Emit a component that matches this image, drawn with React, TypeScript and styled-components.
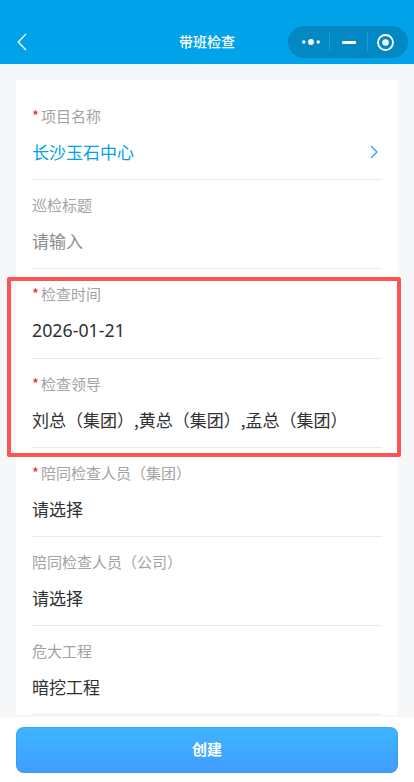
import React from "react";
import styled, { createGlobalStyle } from "styled-components";

const Global = createGlobalStyle`
  html, body { margin: 0; padding: 0; background: #f6f7f9; }
  body { font-family: "Noto Sans CJK SC", "Noto Sans", sans-serif; }
  * { box-sizing: border-box; }
`;

const Page = styled.div`
  width: 414px;
  height: 782px;
  display: flex;
  flex-direction: column;
  overflow: hidden;
`;

const NavBar = styled.header`
  flex: none;
  height: 64px;
  background: #00a2ea;
  padding: 26px 6px 6px 17px;
  display: flex;
  align-items: center;
`;

const BackButton = styled.div`
  width: 10px;
  height: 18px;
  display: flex;
`;

const NavTitle = styled.div`
  flex: 1;
  text-align: center;
  color: #fff;
  font-size: 14px;
  font-weight: 500;
  line-height: 20px;
  padding-left: 99px;
  margin-top: -2px;
`;

const Capsule = styled.div`
  width: 120px;
  height: 32px;
  border-radius: 16px;
  background: #0388c6;
  border: 1px solid #0a82b8;
  display: flex;
  align-items: center;
`;

const CapsuleCell = styled.div<{ $w: number; $inset?: number }>`
  width: ${(p) => p.$w}px;
  padding-left: ${(p) => p.$inset ?? 0}px;
  display: flex;
  justify-content: center;
  align-items: center;
`;

const CapsuleDivider = styled.div`
  width: 1px;
  height: 18px;
  background: #2a9bd0;
`;

const Content = styled.main`
  flex: 1;
  min-height: 0;
  padding: 16px 16px 0;
  position: relative;
  overflow: hidden;
`;

const Card = styled.section`
  background: #fff;
  padding: 11px 16px 0;
`;

const Field = styled.div`
  height: 89.2px;
  padding-top: 15px;
  border-bottom: 1px solid #e9eaec;
`;

const Label = styled.div`
  font-size: 15px;
  line-height: 20px;
  color: #a3a3a3;
  display: flex;
`;

const Star = styled.span`
  color: #f5222d;
  width: 9px;
`;

const ValueRow = styled.div`
  margin-top: 14px;
  height: 24px;
  display: flex;
  justify-content: space-between;
  align-items: center;
  padding-right: 4px;
`;

const Value = styled.div<{ $tone?: "link" | "muted"; $numeric?: boolean }>`
  font-size: ${(p) => (p.$numeric ? "17.8px" : "17px")};
  line-height: 24px;
  white-space: nowrap;
  color: ${(p) => (p.$tone === "link" ? "#00a2ea" : p.$tone === "muted" ? "#8c8c8c" : "#303133")};
  ${(p) => p.$numeric && `font-family: "Noto Sans", sans-serif;`}
`;

const Highlight = styled.div`
  position: absolute;
  left: 7px;
  top: 213px;
  width: 394px;
  height: 180px;
  border: 4px solid #fa5555;
  border-radius: 2px;
  pointer-events: none;
`;

const Footer = styled.footer`
  flex: none;
  height: 65px;
  background: #fff;
  padding: 10px 16px 0;
`;

const CreateButton = styled.div`
  height: 46px;
  border-radius: 8px;
  background: linear-gradient(180deg, #3fb6ff 0%, #409cff 100%);
  box-shadow: inset 0 0 0 1px rgba(40, 130, 210, 0.25);
  color: #fff;
  font-size: 15px;
  font-weight: 700;
  line-height: 20px;
  padding-bottom: 2px;
  display: flex;
  align-items: center;
  justify-content: center;
`;

const fields: {
  label: string;
  value: string;
  required?: boolean;
  tone?: "link" | "muted";
  arrow?: boolean;
  numeric?: boolean;
}[] = [
  { label: "项目名称", value: "长沙玉石中心", required: true, tone: "link", arrow: true },
  { label: "巡检标题", value: "请输入", tone: "muted" },
  { label: "检查时间", value: "2026-01-21", required: true, numeric: true },
  { label: "检查领导", value: "刘总（集团）,黄总（集团）,孟总（集团）", required: true },
  { label: "陪同检查人员（集团）", value: "请选择", required: true },
  { label: "陪同检查人员（公司）", value: "请选择" },
  { label: "危大工程", value: "暗挖工程" },
];

export default function App() {
  return (
    <Page>
      <Global />
      <NavBar>
        <BackButton>
          <svg width="10" height="18" viewBox="0 0 10 18" fill="none">
            <path d="M9 1 1.2 9 9 17" stroke="#fff" strokeWidth="1.3" />
          </svg>
        </BackButton>
        <NavTitle>带班检查</NavTitle>
        <Capsule>
          <CapsuleCell $w={40} $inset={4}>
            <svg width="18" height="8" viewBox="0 0 18 8" fill="#fff">
              <circle cx="1.8" cy="4" r="1.7" />
              <circle cx="9" cy="4" r="2.9" />
              <circle cx="16.2" cy="4" r="1.7" />
            </svg>
          </CapsuleCell>
          <CapsuleDivider />
          <CapsuleCell $w={37}>
            <svg width="14" height="3" viewBox="0 0 14 3" fill="#fff">
              <rect width="14" height="3" rx="1" />
            </svg>
          </CapsuleCell>
          <CapsuleDivider />
          <CapsuleCell $w={34}>
            <svg width="17" height="17" viewBox="0 0 17 17" fill="none">
              <circle cx="8.5" cy="8.5" r="7.5" stroke="#fff" strokeWidth="1.8" />
              <circle cx="8.5" cy="8.5" r="3.2" fill="#fff" />
            </svg>
          </CapsuleCell>
        </Capsule>
      </NavBar>
      <Content>
        <Card>
          {fields.map((f) => (
            <Field key={f.label}>
              <Label>
                {f.required && <Star>*</Star>}
                {f.label}
              </Label>
              <ValueRow>
                <Value $tone={f.tone} $numeric={f.numeric}>
                  {f.value}
                </Value>
                {f.arrow && (
                  <svg width="8" height="14" viewBox="0 0 8 14" fill="none">
                    <path d="M1 1 7 7l-6 6" stroke="#2f9ff0" strokeWidth="1.3" />
                  </svg>
                )}
              </ValueRow>
            </Field>
          ))}
        </Card>
        <Highlight />
      </Content>
      <Footer>
        <CreateButton>创建</CreateButton>
      </Footer>
    </Page>
  );
}
